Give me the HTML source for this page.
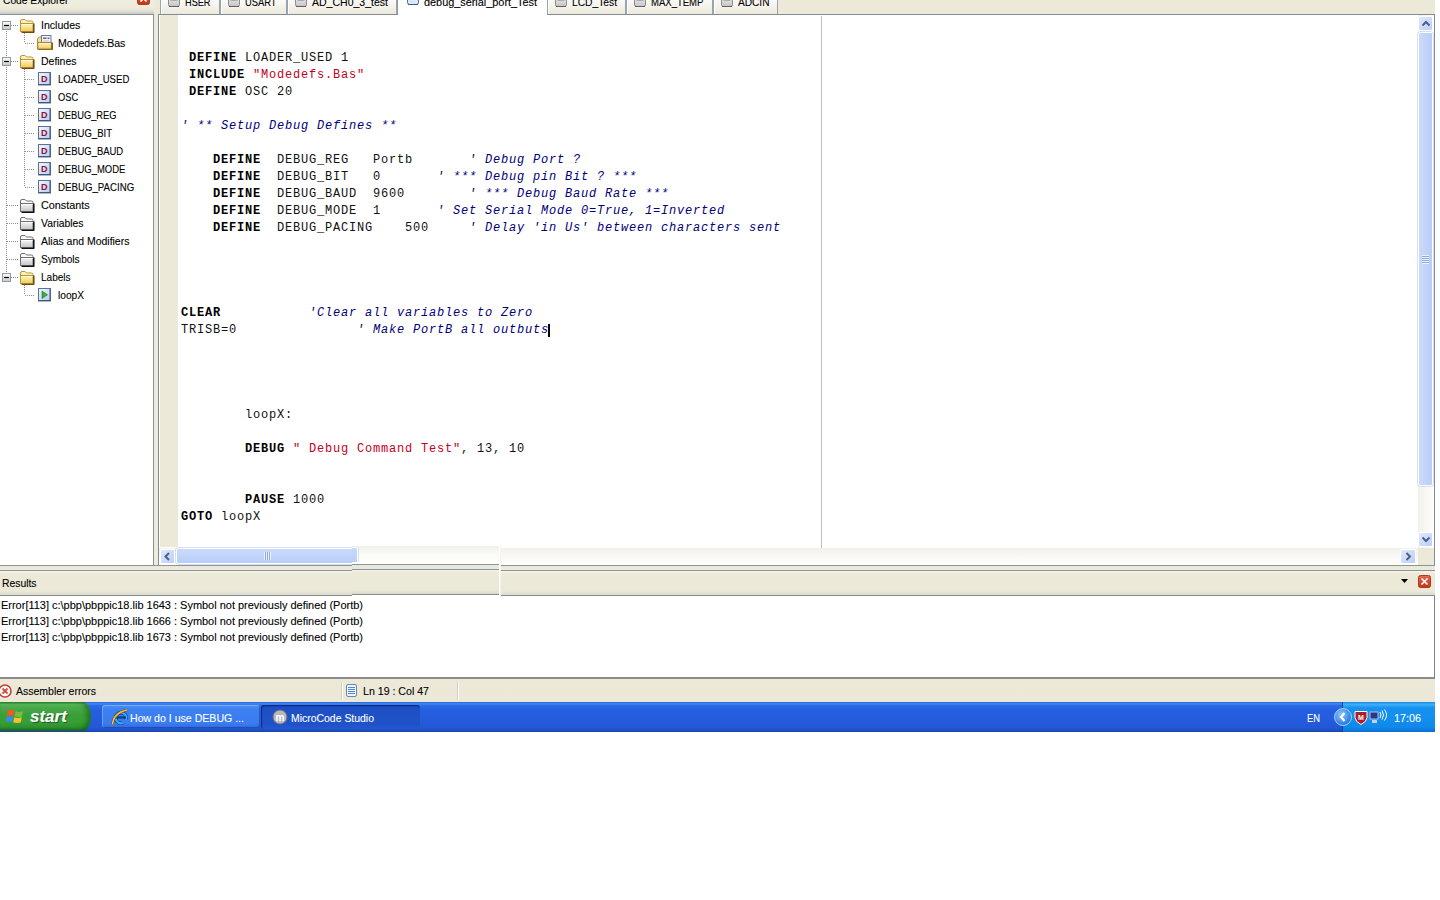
<!DOCTYPE html>
<html><head><meta charset="utf-8"><style>
*{margin:0;padding:0;box-sizing:border-box}
html,body{width:1440px;height:900px;background:#fff;overflow:hidden;position:relative;font-family:"Liberation Sans",sans-serif;font-size:11px;color:#000}
.a{position:absolute}
.t{position:absolute;white-space:pre;font-size:11px;line-height:13px;transform-origin:0 0;-webkit-text-stroke:.1px currentColor}
#app{position:absolute;left:0;top:0;width:1435px;height:702px;background:#ece9d8}
#cehdr{left:0;top:0;width:154px;height:14px;background:linear-gradient(#eceee0,#efebdc 55%,#e6e4d8 75%,#c8ccc8 100%)}
#tree{left:0;top:14px;width:154px;height:552px;background:#fff;border:1px solid #8a9096;border-left:none}
.ti{position:absolute;height:13px;line-height:13px;white-space:nowrap;font-size:11px;transform:scaleX(.885);transform-origin:0 0}
.dv{position:absolute;width:1px;background:repeating-linear-gradient(#8c8c8c 0 1px,transparent 1px 2px)}
.dh{position:absolute;height:1px;background:repeating-linear-gradient(90deg,#8c8c8c 0 1px,transparent 1px 2px)}
#ed{left:158px;top:14px;width:1277px;height:552px;border:1px solid #838b94;background:#fff}
.tab{position:absolute;top:-4px;height:19px;background:linear-gradient(#fdfdfb,#f3f1e8 60%,#ebe8d8);border:1px solid #98a4ae;border-bottom:none;box-shadow:inset 1px 0 0 #fff}
.tab.act{background:#fff;top:-6px;height:21px;border-color:#919b9c}
.tico{position:absolute;left:7px;top:-1px;width:12px;height:12px}
.ttx{position:absolute;left:25px;top:-4px;font-size:11px;line-height:13px;white-space:pre;transform:scaleX(.885);transform-origin:0 0}
.cl{position:absolute;left:181px;height:17px;line-height:17px;font-family:"Liberation Mono",monospace;font-size:12px;letter-spacing:.8px;white-space:pre;color:#111}
.k{font-weight:bold;color:#000}
.s{color:#c4001c}
.c{color:#00007a;font-style:italic}
#reshdr{left:0;top:570px;width:1435px;height:26px;background:linear-gradient(#f6f4ec,#ece9d8 3px,#ece9d8 20px,#dcdcd2);border-top:1px solid #8a949a;border-bottom:1px solid #8a8a88}
#res{left:0;top:596px;width:1435px;height:83px;background:#fff;border-right:1px solid #808080;border-bottom:2px solid #8a8a8a}
.rl{position:absolute;left:1px;font-size:11px;line-height:13px;white-space:pre;transform:scaleX(.885);transform-origin:0 0}
#status{left:0;top:680px;width:1435px;height:22px;background:linear-gradient(#ece9d8,#ebe8d7)}
#task{left:0;top:702px;width:1435px;height:30px;background:linear-gradient(#2a5fd8 0%,#3f8cf3 6%,#2d6ae6 12%,#255ee0 30%,#245cdc 60%,#2258d6 85%,#1d4ec0 95%,#1941a5 100%)}
</style></head><body>
<svg width="0" height="0" style="position:absolute">
<defs>
<linearGradient id="gy" x1="0" y1="0" x2="0" y2="1"><stop offset="0" stop-color="#fff6c0"/><stop offset="1" stop-color="#f2ca58"/></linearGradient>
<linearGradient id="gg" x1="0" y1="0" x2="0" y2="1"><stop offset="0" stop-color="#f8f8f8"/><stop offset="1" stop-color="#c4c4c4"/></linearGradient>
<linearGradient id="gb" x1="0" y1="0" x2="1" y2="1"><stop offset="0" stop-color="#f4f7ff"/><stop offset="1" stop-color="#b4caf0"/></linearGradient>
<linearGradient id="gm" x1="0" y1="0" x2="0" y2="1"><stop offset="0" stop-color="#ffffff"/><stop offset="1" stop-color="#c8c8c0"/></linearGradient>
<symbol id="fy" viewBox="0 0 16 14"><path d="M1.5 11.5V2q0-1.5 1.5-1.5h3l1.5 1.5h5q1.5 0 1.5 1.5v8z" fill="#fff2b8" stroke="#b89438"/><rect x="1.5" y="4.5" width="12.5" height="8" fill="url(#gy)" stroke="#b89438"/><path d="M2.5 5.5h11" stroke="#fffbe0" stroke-width="1"/><path d="M14.8 4.5v8.3q0 .8-.8.8H2.5" fill="none" stroke="#6a4e10" stroke-width="1.5"/></symbol>
<symbol id="fg" viewBox="0 0 16 14"><path d="M1.5 11.5V2q0-1.5 1.5-1.5h3l1.5 1.5h5q1.5 0 1.5 1.5v8z" fill="#fafafa" stroke="#707070"/><rect x="1.5" y="4.5" width="12.5" height="8" fill="url(#gg)" stroke="#707070"/><path d="M2.5 5.5h11" stroke="#fff" stroke-width="1"/><path d="M14.8 4.5v8.3q0 .8-.8.8H2.5" fill="none" stroke="#101010" stroke-width="1.5"/></symbol>
<symbol id="di" viewBox="0 0 13 14"><rect x="0.5" y="0.5" width="12" height="12.5" fill="url(#gb)" stroke="#5a7098"/><path d="M1 12.5h11.5M12 1v11.5" stroke="#40587e" stroke-width="1"/><text x="6.2" y="10" font-family="Liberation Sans" font-weight="bold" font-size="9" fill="#8c1030" text-anchor="middle">D</text></symbol>
<symbol id="li" viewBox="0 0 13 14"><rect x="0.5" y="0.5" width="12" height="12.5" fill="url(#gb)" stroke="#5a7098"/><path d="M1 12.5h11.5M12 1v11.5" stroke="#40587e" stroke-width="1"/><path d="M4 3l5.5 3.8L4 10.6z" fill="#38b038" stroke="#1a7a1a" stroke-width="0.6"/></symbol>
<symbol id="mb" viewBox="0 0 9 9"><rect x="0.5" y="0.5" width="8" height="8" fill="url(#gm)" stroke="#8a9aa8"/><path d="M2 4.5h5" stroke="#000" stroke-width="1.2"/></symbol>
<symbol id="inc" viewBox="0 0 16 15"><path d="M.5 14V3.5l2-1.5h3v12z" fill="#f8e088" stroke="#a88830"/><rect x="4.5" y=".5" width="9.5" height="10" fill="#f2f2fc" stroke="#6a78a8"/><path d="M6 3.2h3.5M10.5 3.2h2" stroke="#6a6a6a" stroke-width="1.6"/><path d="M6 6h6" stroke="#e0b8b8" stroke-width="1"/><rect x=".8" y="7.5" width="13.7" height="6.5" fill="url(#gy)" stroke="#a88830"/><path d="M1.5 8.5h12" stroke="#fff4c8"/><path d="M15.2 7.5v6.8q0 .6-.6.6H1.5" fill="none" stroke="#6a5010" stroke-width="1.3"/></symbol>
<symbol id="doc" viewBox="0 0 12 12"><rect x=".5" y="-1.5" width="11" height="12" rx="2" fill="url(#gg)" stroke="#8a8a8a"/><path d="M2.5 1.5h7M2.5 4h7" stroke="#7a7a7a" stroke-width="1"/><path d="M1 10.5h10" stroke="#606060"/></symbol>
<symbol id="docb" viewBox="0 0 12 12"><rect x=".5" y="-1.5" width="11" height="12" rx="2" fill="#dce8fa" stroke="#4a6aa0"/><path d="M2.5 1.5h7M2.5 4h7" stroke="#2a7ae0" stroke-width="1.2"/><path d="M1 10.5h10" stroke="#3a5a90"/></symbol>
<linearGradient id="gr" x1="0" y1="0" x2="0" y2="1"><stop offset="0" stop-color="#e86a4e"/><stop offset="1" stop-color="#c03418"/></linearGradient>
<symbol id="xb" viewBox="0 0 13 13"><rect x="0.5" y="0.5" width="12" height="12" rx="2" fill="url(#gr)" stroke="#b03a20"/><path d="M3.5 3.5l6 6M9.5 3.5l-6 6" stroke="#fff" stroke-width="1.6"/></symbol>
</defs></svg>
<div id="app"></div>
<div id="cehdr" class="a"></div>
<div class="t" style="left:3px;top:-6px;font-size:11px;transform:scaleX(0.9313);">Code Explorer</div>
<svg class="a" style="left:137px;top:-8px" width="13" height="13"><use href="#xb"/></svg>
<div id="tree" class="a"></div>
<div class="dv" style="left:6px;top:31px;height:246px"></div>
<div class="dv" style="left:24px;top:31px;height:12px"></div>
<div class="dv" style="left:24px;top:67px;height:120px"></div>
<div class="dv" style="left:24px;top:283px;height:12px"></div>
<div class="dh" style="left:11px;top:25px;width:7px"></div>
<svg class="a" style="left:2px;top:21px" width="9" height="9"><use href="#mb"/></svg>
<svg class="a" style="left:19px;top:19px" width="16" height="14" viewBox="0 0 16 14"><use href="#fy"/></svg>
<div class="t" style="left:41px;top:19px;font-size:11px;transform:scaleX(0.9613);">Includes</div>
<div class="dh" style="left:25px;top:43px;width:10px"></div>
<svg class="a" style="left:37px;top:35px" width="16" height="15" viewBox="0 0 16 15"><use href="#inc"/></svg>
<div class="t" style="left:58px;top:37px;font-size:11px;transform:scaleX(0.9584);">Modedefs.Bas</div>
<div class="dh" style="left:11px;top:61px;width:7px"></div>
<svg class="a" style="left:2px;top:57px" width="9" height="9"><use href="#mb"/></svg>
<svg class="a" style="left:19px;top:55px" width="16" height="14" viewBox="0 0 16 14"><use href="#fy"/></svg>
<div class="t" style="left:41px;top:55px;font-size:11px;transform:scaleX(0.9518);">Defines</div>
<div class="dh" style="left:25px;top:79px;width:10px"></div>
<svg class="a" style="left:38px;top:72px" width="13" height="14"><use href="#di"/></svg>
<div class="t" style="left:58px;top:73px;font-size:11px;transform:scaleX(0.8703);">LOADER_USED</div>
<div class="dh" style="left:25px;top:97px;width:10px"></div>
<svg class="a" style="left:38px;top:90px" width="13" height="14"><use href="#di"/></svg>
<div class="t" style="left:58px;top:91px;font-size:11px;transform:scaleX(0.8472);">OSC</div>
<div class="dh" style="left:25px;top:115px;width:10px"></div>
<svg class="a" style="left:38px;top:108px" width="13" height="14"><use href="#di"/></svg>
<div class="t" style="left:58px;top:109px;font-size:11px;transform:scaleX(0.8469);">DEBUG_REG</div>
<div class="dh" style="left:25px;top:133px;width:10px"></div>
<svg class="a" style="left:38px;top:126px" width="13" height="14"><use href="#di"/></svg>
<div class="t" style="left:58px;top:127px;font-size:11px;transform:scaleX(0.8659);">DEBUG_BIT</div>
<div class="dh" style="left:25px;top:151px;width:10px"></div>
<svg class="a" style="left:38px;top:144px" width="13" height="14"><use href="#di"/></svg>
<div class="t" style="left:58px;top:145px;font-size:11px;transform:scaleX(0.8602);">DEBUG_BAUD</div>
<div class="dh" style="left:25px;top:169px;width:10px"></div>
<svg class="a" style="left:38px;top:162px" width="13" height="14"><use href="#di"/></svg>
<div class="t" style="left:58px;top:163px;font-size:11px;transform:scaleX(0.8613);">DEBUG_MODE</div>
<div class="dh" style="left:25px;top:187px;width:10px"></div>
<svg class="a" style="left:38px;top:180px" width="13" height="14"><use href="#di"/></svg>
<div class="t" style="left:58px;top:181px;font-size:11px;transform:scaleX(0.8811);">DEBUG_PACING</div>
<div class="dh" style="left:7px;top:205px;width:11px"></div>
<svg class="a" style="left:19px;top:199px" width="16" height="14" viewBox="0 0 16 14"><use href="#fg"/></svg>
<div class="t" style="left:41px;top:199px;font-size:11px;transform:scaleX(0.9832);">Constants</div>
<div class="dh" style="left:7px;top:223px;width:11px"></div>
<svg class="a" style="left:19px;top:217px" width="16" height="14" viewBox="0 0 16 14"><use href="#fg"/></svg>
<div class="t" style="left:41px;top:217px;font-size:11px;transform:scaleX(0.9435);">Variables</div>
<div class="dh" style="left:7px;top:241px;width:11px"></div>
<svg class="a" style="left:19px;top:235px" width="16" height="14" viewBox="0 0 16 14"><use href="#fg"/></svg>
<div class="t" style="left:41px;top:235px;font-size:11px;transform:scaleX(0.9512);">Alias and Modifiers</div>
<div class="dh" style="left:7px;top:259px;width:11px"></div>
<svg class="a" style="left:19px;top:253px" width="16" height="14" viewBox="0 0 16 14"><use href="#fg"/></svg>
<div class="t" style="left:41px;top:253px;font-size:11px;transform:scaleX(0.9150);">Symbols</div>
<div class="dh" style="left:11px;top:277px;width:7px"></div>
<svg class="a" style="left:2px;top:273px" width="9" height="9"><use href="#mb"/></svg>
<svg class="a" style="left:19px;top:271px" width="16" height="14" viewBox="0 0 16 14"><use href="#fy"/></svg>
<div class="t" style="left:41px;top:271px;font-size:11px;transform:scaleX(0.9130);">Labels</div>
<div class="dh" style="left:25px;top:295px;width:10px"></div>
<svg class="a" style="left:38px;top:288px" width="13" height="14"><use href="#li"/></svg>
<div class="t" style="left:58px;top:289px;font-size:11px;transform:scaleX(0.9239);">loopX</div>
<div class="tab" style="left:160px;width:60px"><svg class="tico" style="left:7px" viewBox="0 0 12 12"><use href="#doc"/></svg></div>
<div class="t" style="left:185px;top:-4px;font-size:11px;transform:scaleX(0.8344);">HSER</div>
<div class="tab" style="left:220px;width:67px"><svg class="tico" style="left:7px" viewBox="0 0 12 12"><use href="#doc"/></svg></div>
<div class="t" style="left:245px;top:-4px;font-size:11px;transform:scaleX(0.8492);">USART</div>
<div class="tab" style="left:287px;width:110px"><svg class="tico" style="left:7px" viewBox="0 0 12 12"><use href="#doc"/></svg></div>
<div class="t" style="left:312px;top:-4px;font-size:11px;transform:scaleX(0.9560);">AD_CH0_3_test</div>
<div class="tab act" style="left:397px;width:151px"><svg class="tico" style="left:9px" viewBox="0 0 12 12"><use href="#docb"/></svg></div>
<div class="t" style="left:424px;top:-4px;font-size:11px;transform:scaleX(0.9881);">debug_serial_port_Test</div>
<div class="tab" style="left:547px;width:79px"><svg class="tico" style="left:7px" viewBox="0 0 12 12"><use href="#doc"/></svg></div>
<div class="t" style="left:572px;top:-4px;font-size:11px;transform:scaleX(0.9317);">LCD_Test</div>
<div class="tab" style="left:626px;width:87px"><svg class="tico" style="left:7px" viewBox="0 0 12 12"><use href="#doc"/></svg></div>
<div class="t" style="left:651px;top:-4px;font-size:11px;transform:scaleX(0.8659);">MAX_TEMP</div>
<div class="tab" style="left:713px;width:65px"><svg class="tico" style="left:7px" viewBox="0 0 12 12"><use href="#doc"/></svg></div>
<div class="t" style="left:738px;top:-4px;font-size:11px;transform:scaleX(0.9201);">ADCIN</div>
<div id="ed" class="a"></div>
<div class="a" style="left:398px;top:14px;width:149px;height:1px;background:#fff"></div>
<div class="a" style="left:154px;top:15px;width:4px;height:551px;background:#e9edd9"></div>
<div class="a" style="left:160px;top:15px;width:17px;height:532px;background:#ece9d8"></div>
<div class="a" style="left:177px;top:15px;width:1px;height:532px;background:#e8e8e4"></div>
<div class="a" style="left:821px;top:16px;width:1px;height:532px;background:#c0c0c0"></div>
<div class="cl" style="top:50px"> <span class="k">DEFINE</span> LOADER_USED 1</div>
<div class="cl" style="top:67px"> <span class="k">INCLUDE</span> <span class="s">"Modedefs.Bas"</span></div>
<div class="cl" style="top:84px"> <span class="k">DEFINE</span> OSC 20</div>
<div class="cl" style="top:118px"><span class="c">' ** Setup Debug Defines **</span></div>
<div class="cl" style="top:152px">    <span class="k">DEFINE</span>  DEBUG_REG   Portb       <span class="c">' Debug Port ?</span></div>
<div class="cl" style="top:169px">    <span class="k">DEFINE</span>  DEBUG_BIT   0       <span class="c">' *** Debug pin Bit ? ***</span></div>
<div class="cl" style="top:186px">    <span class="k">DEFINE</span>  DEBUG_BAUD  9600        <span class="c">' *** Debug Baud Rate ***</span></div>
<div class="cl" style="top:203px">    <span class="k">DEFINE</span>  DEBUG_MODE  1       <span class="c">' Set Serial Mode 0=True, 1=Inverted</span></div>
<div class="cl" style="top:220px">    <span class="k">DEFINE</span>  DEBUG_PACING    500     <span class="c">' Delay 'in Us' between characters sent</span></div>
<div class="cl" style="top:305px"><span class="k">CLEAR</span>           <span class="c">'Clear all variables to Zero</span></div>
<div class="cl" style="top:322px">TRISB=0               <span class="c">' Make PortB all outbuts</span></div>
<div class="cl" style="top:407px">        loopX:</div>
<div class="cl" style="top:441px">        <span class="k">DEBUG</span> <span class="s">" Debug Command Test"</span>, 13, 10</div>
<div class="cl" style="top:492px">        <span class="k">PAUSE</span> 1000</div>
<div class="cl" style="top:509px"><span class="k">GOTO</span> loopX</div>
<div class="a" style="left:548px;top:324px;width:2px;height:13px;background:#000"></div>

<div class="a" style="left:1418px;top:15px;width:16px;height:533px;background:linear-gradient(90deg,#f3f1ec,#fefefb)"></div>
<div class="a" style="left:1418px;top:16px;width:15px;height:15px;border-radius:2px;background:linear-gradient(135deg,#dfe8fd,#bccffa);border:1px solid #fff"></div>
<svg class="a" style="left:1418.5px;top:16px" width="14" height="15"><path d="M3.5 9.5L7 6l3.5 3.5" fill="none" stroke="#4d6185" stroke-width="2"/></svg>
<div class="a" style="left:1418px;top:32px;width:15px;height:454px;border-radius:2px;background:linear-gradient(90deg,#cbdafc,#b8cdf8);border:1px solid #fff;box-shadow:0 0 0 .5px #b0c4ef"></div>
<div class="a" style="left:1422px;top:255px;width:7px;height:9px;background:repeating-linear-gradient(#eef3fe 0 1px,#8ca8e0 1px 2px)"></div>
<div class="a" style="left:1418px;top:532px;width:15px;height:15px;border-radius:2px;background:linear-gradient(135deg,#dfe8fd,#bccffa);border:1px solid #fff"></div>
<svg class="a" style="left:1418.5px;top:532px" width="14" height="15"><path d="M3.5 5.5L7 9l3.5-3.5" fill="none" stroke="#4d6185" stroke-width="2"/></svg>

<div class="a" style="left:159px;top:548px;width:1259px;height:17px;background:linear-gradient(#f3f1ec,#fefefb)"></div>
<div class="a" style="left:1418px;top:548px;width:16px;height:17px;background:#ece9d8"></div>
<div class="a" style="left:160px;top:549px;width:15px;height:15px;border-radius:2px;background:linear-gradient(135deg,#dfe8fd,#bccffa);border:1px solid #fff"></div>
<svg class="a" style="left:160px;top:549px" width="15" height="15"><path d="M9 4L5.5 7.5 9 11" fill="none" stroke="#4d6185" stroke-width="2"/></svg>
<div class="a" style="left:176px;top:548px;width:183px;height:16px;border-radius:2px;background:linear-gradient(#cbdafc,#b8cdf8);border:1px solid #fff;box-shadow:0 0 0 .5px #b0c4ef"></div>
<div class="a" style="left:264px;top:552px;width:7px;height:8px;background:repeating-linear-gradient(90deg,#eef3fe 0 1px,#8ca8e0 1px 2px)"></div>
<div class="a" style="left:1400px;top:549px;width:16px;height:15px;border-radius:2px;background:linear-gradient(135deg,#dfe8fd,#bccffa);border:1px solid #fff"></div>
<svg class="a" style="left:1400px;top:549px" width="16" height="15"><path d="M6.5 4L10 7.5 6.5 11" fill="none" stroke="#4d6185" stroke-width="2"/></svg>

<div id="reshdr" class="a"></div>
<div class="a" style="left:0;top:565px;width:1435px;height:1px;background:#8a949a"></div>
<div class="t" style="left:2px;top:577px;font-size:11px;transform:scaleX(0.9404);">Results</div>
<svg class="a" style="left:1401px;top:579px" width="7" height="4"><path d="M0 0h7L3.5 4z" fill="#000"/></svg>
<svg class="a" style="left:1418px;top:575px" width="13" height="13"><use href="#xb"/></svg>
<div id="res" class="a"></div>
<div class="t" style="left:1px;top:599px;font-size:11px;transform:scaleX(0.9972);">Error[113] c:\pbp\pbppic18.lib 1643 : Symbol not previously defined (Portb)</div>
<div class="t" style="left:1px;top:615px;font-size:11px;transform:scaleX(0.9972);">Error[113] c:\pbp\pbppic18.lib 1666 : Symbol not previously defined (Portb)</div>
<div class="t" style="left:1px;top:631px;font-size:11px;transform:scaleX(0.9972);">Error[113] c:\pbp\pbppic18.lib 1673 : Symbol not previously defined (Portb)</div>
<div class="a" style="left:352px;top:546px;width:147px;height:50px;background:linear-gradient(#f0f0ea 0px,#fbfbf6 8px,#fefefb 18px,#8a949a 18px,#8a949a 19px,#e6eadc 19px,#e6eadc 23px,#8a949a 23px,#8a949a 24px,#f4f2ea 24px,#ece9d8 27px,#ece9d8 44px,#d8dad0 48px,#8a8a88 48px,#8a8a88 49px,#fff 49px)"></div>
<div class="a" style="left:352px;top:547px;width:6px;height:16px;border-radius:0 2px 2px 0;background:linear-gradient(#cbdafc,#b8cdf8);border:1px solid #fff;border-left:none;box-shadow:.5px 0 0 #b0c4ef"></div>
<div class="a" style="left:499px;top:545px;width:1px;height:53px;background:#fff"></div>
<div class="a" style="left:500px;top:545px;width:1px;height:53px;background:#f4f4ee"></div>
<div id="status" class="a"></div>
<svg class="a" style="left:-1px;top:683px" width="13" height="16"><circle cx="6" cy="8" r="6" fill="#fff" stroke="#c83c30" stroke-width="1.6"/><path d="M3.5 5.5l5 5M8.5 5.5l-5 5" stroke="#d84a3a" stroke-width="1.8"/></svg>
<div class="t" style="left:16px;top:685px;font-size:11px;transform:scaleX(0.9552);">Assembler errors</div>
<div class="a" style="left:341px;top:682px;width:1px;height:18px;background:#d4d0c0"></div>
<div class="a" style="left:342px;top:682px;width:1px;height:18px;background:#fff"></div>
<svg class="a" style="left:345px;top:683px" width="13" height="15"><rect x="1.5" y="1.5" width="10" height="12" rx="1.5" fill="#eef4fc" stroke="#6f86a8"/><path d="M3 4.5h7M3 6.5h7M3 8.5h7M3 10.5h7" stroke="#4a8ae0"/></svg>
<div class="t" style="left:363px;top:685px;font-size:11px;transform:scaleX(0.9635);">Ln 19 : Col 47</div>
<div class="a" style="left:457px;top:682px;width:1px;height:18px;background:#d4d0c0"></div>
<div class="a" style="left:458px;top:682px;width:1px;height:18px;background:#fff"></div>

<div id="task" class="a"></div>
<div class="a" style="left:0;top:702px;width:91px;height:29px;border-radius:0 9px 9px 0/0 14px 14px 0;background:linear-gradient(#2e8a2e 0%,#5ab85a 8%,#48aa48 20%,#3a9e3a 45%,#36a036 70%,#2f902f 88%,#1f6a1f 100%);box-shadow:inset -4px 0 5px rgba(0,70,0,.45)"></div>
<svg class="a" style="left:6px;top:708px" width="18" height="18" viewBox="0 0 18 18"><path d="M1.5 2.5q3-1.5 7 .5l-1 5q-3-1.5-7 0z" fill="#f05a28"/><path d="M9.5 3.2q3.5 1.5 7.5 0l-1 5q-3.5 1.5-7.5 0z" fill="#7cbb40"/><path d="M0.3 9q3.5-1.5 7 0l-1 5q-3.5-1.5-7 0z" fill="#3a8ae8"/><path d="M8.3 9.2q3.5 1.5 7.5 0l-1 5q-3.5 1.5-7.5 0z" fill="#fbc02d"/></svg>
<div class="t" style="left:30px;top:707px;font-size:17px;line-height:20px;font-weight:bold;font-style:italic;color:#fff;text-shadow:1px 1px 1px rgba(0,0,0,.45)">start</div>
<div class="a" style="left:102px;top:705px;width:158px;height:23px;border-radius:3px;background:linear-gradient(#4f8ef5,#3c80f2 20%,#3a7cf0 80%,#2f6ce0);box-shadow:inset 1px 1px 0 rgba(255,255,255,.25),inset -1px -1px 0 rgba(0,0,80,.3)"></div>
<svg class="a" style="left:111px;top:708px" width="18" height="18" viewBox="0 0 18 18"><circle cx="10" cy="10" r="5.3" fill="none" stroke="#0a3a90" stroke-width="3.6"/><circle cx="10" cy="10" r="5.3" fill="none" stroke="#38b0ff" stroke-width="2.2"/><path d="M5 9.5h10" stroke="#0a3a90" stroke-width="2.2"/><path d="M11 11.5h6v4h-6z" fill="#3a7ef0"/><path d="M1.5 16.5Q2.5 5 16 2" fill="none" stroke="#6a4a18" stroke-width="2.6"/><path d="M1.5 16.5Q2.5 5 16 2" fill="none" stroke="#f0c040" stroke-width="1.6"/></svg>
<div class="a" style="left:261px;top:705px;width:159px;height:24px;border-radius:3px;background:linear-gradient(#1a48b8,#1e50c4 20%,#1f52c8 80%,#2558d0);box-shadow:inset 1px 1px 1px rgba(0,0,60,.5)"></div>
<svg class="a" style="left:272px;top:709px" width="16" height="16"><circle cx="8" cy="8" r="7" fill="#b8b8c0" stroke="#707080"/><text x="8" y="12" font-family="Liberation Sans" font-size="10" font-weight="bold" fill="#fff" text-anchor="middle">m</text></svg>
<div class="a" style="left:1342px;top:702px;width:93px;height:30px;background:linear-gradient(#1a8ae8 0%,#3cb0fa 8%,#1790ef 20%,#1290f0 50%,#0f88ea 85%,#0c6fd0 100%);border-left:1px solid #0a4aa0"></div>
<div class="a" style="left:1334px;top:708px;width:18px;height:18px;border-radius:50%;background:radial-gradient(circle at 40% 35%,#8ec8ff,#2a7ee0 70%,#1858b8);border:1px solid #a8d0ff"></div>
<svg class="a" style="left:1334px;top:708px" width="18" height="18"><path d="M10.5 5L7 9l3.5 4" fill="none" stroke="#fff" stroke-width="2.2"/></svg>
<svg class="a" style="left:1354px;top:710px" width="14" height="15"><path d="M1 1.5h12v6q0 4-6 7-6-3-6-7z" fill="#b01c28" stroke="#fff" stroke-width="1"/><text x="7" y="10" font-family="Liberation Sans" font-size="7" font-weight="bold" fill="#fff" text-anchor="middle">M</text></svg>
<svg class="a" style="left:1369px;top:709px" width="19" height="16"><rect x="1" y="3" width="8" height="7" fill="#2a3a80" stroke="#b0c0e0"/><rect x="3" y="11" width="5" height="3" fill="#c0d0f0"/><path d="M11 3q2 3 0 6M13 1.5q3 4.5 0 9M15.5 0.5q4 5.5 0 11" fill="none" stroke="#fff" stroke-width="1"/></svg>

<div class="t" style="left:130px;top:712px;font-size:11px;transform:scaleX(0.9611);color:#fff">How do I use DEBUG ...</div>
<div class="t" style="left:291px;top:712px;font-size:11px;transform:scaleX(0.9492);color:#fff">MicroCode Studio</div>
<div class="t" style="left:1307px;top:712px;font-size:11px;transform:scaleX(0.8507);color:#fff">EN</div>
<div class="t" style="left:1394px;top:712px;font-size:11px;transform:scaleX(0.9807);color:#fff">17:06</div>
</body></html>
